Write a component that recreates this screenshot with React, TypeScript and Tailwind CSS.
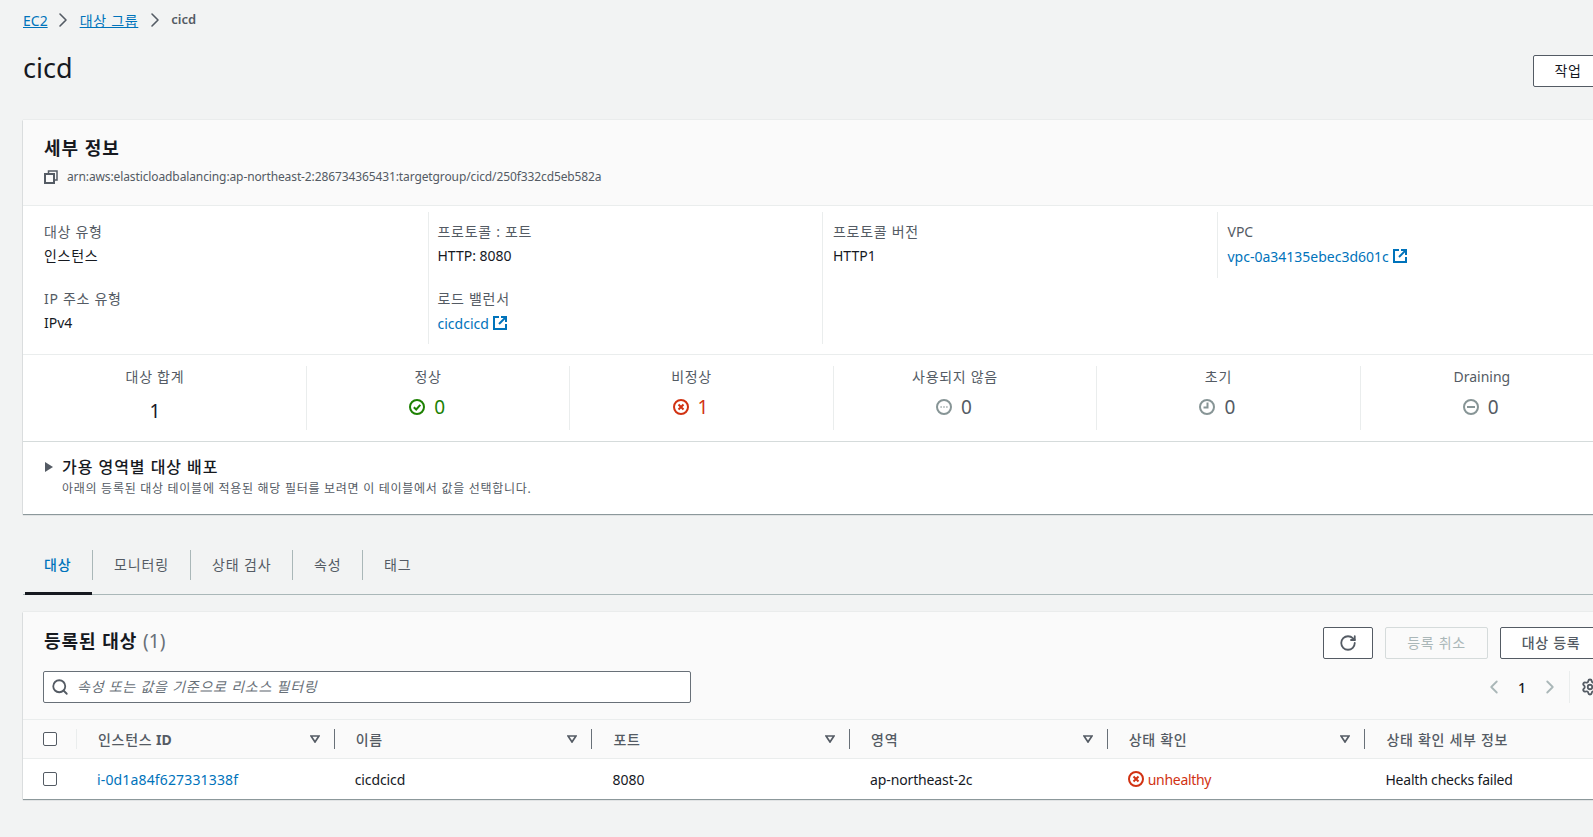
import { ChevronLeft, ChevronRight, RotateCw, Search, Settings } from 'lucide-react'

const columns = ['인스턴스', '이름', '포트', '영역', '상태 확인', '상태 확인 세부 정보']

// Korean glyphs run a bit wider in the reference
const track = (text: string) => (/[가-힣]/.test(text) ? 'tracking-[0.05em]' : '')

function ExternalIcon() {
  return (
    <svg width="14" height="14" viewBox="0 0 14 14" fill="none" stroke="#0073bb" strokeWidth="2" className="shrink-0">
      <path d="M6 1H1v12h12V8" />
      <path d="M8 1h5v5" />
      <path d="M12.6 1.4 6 8" />
    </svg>
  )
}

function CopyIcon() {
  return (
    <svg width="14" height="14" viewBox="0 0 14 14" fill="none" stroke="#545b64" strokeWidth="1.5">
      <rect x="1" y="4" width="9" height="9" strokeWidth="2" />
      <path d="M4.5 3V1H13v9h-2" />
    </svg>
  )
}

function StatusIcon({ kind }: { kind: 'ok' | 'error' | 'dots' | 'clock' | 'minus' }) {
  const color = kind === 'ok' ? '#1d8102' : kind === 'error' ? '#d13212' : '#879596'
  return (
    <svg width="16" height="16" viewBox="0 0 16 16" fill="none" stroke={color} strokeWidth="2" className="shrink-0">
      <circle cx="8" cy="8" r="7" />
      {kind === 'ok' && <path d="M4.8 8.2 7.2 10.5 11.3 5.8" />}
      {kind === 'error' && <path d="M5.5 5.5 10.5 10.5M10.5 5.5 5.5 10.5" />}
      {kind === 'dots' && <path d="M4.5 8h1.2M7.4 8h1.2M10.3 8h1.2" strokeWidth="1.5" />}
      {kind === 'clock' && <path d="M8.5 3.5v5h-4" />}
      {kind === 'minus' && <path d="M4 8h8" />}
    </svg>
  )
}

function SortIcon() {
  return (
    <svg width="10" height="8" viewBox="0 0 10 8" fill="none" stroke="#545b64" strokeWidth="1.7">
      <path d="M1 1h8L5 7z" />
    </svg>
  )
}

function Field({ label, value, link }: { label: string; value: string; link?: boolean }) {
  return (
    <div className="h-[67px]">
      <div className={`h-[23px] leading-[24px] text-[#545b64] ${track(label)}`}>{label}</div>
      {link ? (
        <div className="flex items-center gap-[4px] h-[26px] text-[#0073bb]">
          {value}
          <ExternalIcon />
        </div>
      ) : (
        <div className={`h-[26px] leading-[26px] text-[#16191f] ${track(value)}`}>{value}</div>
      )}
    </div>
  )
}

function Stat({ label, value, kind, first }: { label: string; value: string; kind?: 'ok' | 'error' | 'dots' | 'clock' | 'minus'; first?: boolean }) {
  const valueColor = kind === 'ok' ? 'text-[#1d8102]' : kind === 'error' ? 'text-[#d13212]' : 'text-[#545b64]'
  return (
    <div className={first ? 'w-[283px] h-[64px] pr-[19px]' : 'w-[263.5px] h-[64px] pr-[20px] border-l border-[#eaeded]'}>
      <div className={`text-center h-[27px] leading-[22px] text-[#545b64] ${track(label)}`}>{label}</div>
      {kind ? (
        <div className={`flex items-center justify-center gap-[9px] pr-[2px] h-[28px] text-[19px] ${valueColor}`}>
          <StatusIcon kind={kind} />
          {value}
        </div>
      ) : (
        <div className="text-center h-[36px] leading-[36px] text-[19px] text-[#16191f]">{value}</div>
      )}
    </div>
  )
}

export default function App() {
  return (
    <div className="h-[837px] w-full overflow-hidden bg-[#f2f3f3] pl-[23px] text-[14px] text-[#16191f] font-['Noto_Sans','Noto_Sans_CJK_KR',sans-serif]">
      <div className="w-[1600px]">
        {/* Breadcrumb */}
        <div className="flex items-center h-[40px] text-[#545b64]">
          <a className="text-[#0073bb] underline">EC2</a>
          <ChevronRight size={24} strokeWidth={1.6} className="ml-[3px] mr-[5px]" />
          <a className="text-[#0073bb] underline tracking-[0.05em]">대상 그룹</a>
          <ChevronRight size={24} strokeWidth={1.6} className="ml-[5px] mr-[4px]" />
          <span className="font-semibold text-[13px]">cicd</span>
        </div>

        {/* Title */}
        <div className="flex items-start justify-between mt-[15px] h-[32px]">
          <h1 className="text-[27px] leading-[26px]">cicd</h1>
          <button className="w-[70px] h-[32px] mr-[20px] pb-[2px] bg-white border border-[#545b64] rounded-[2px] text-[#16191f] tracking-[0.05em]">작업</button>
        </div>

        {/* Details card */}
        <section className="mt-[33px] bg-white shadow-[0_1px_1px_rgba(0,28,36,0.4),0_0_1px_rgba(0,28,36,0.2)]">
          <div className="h-[86px] bg-[#fafafa] border-b border-[#eaeded] pl-[21px] pt-[14px]">
            <h2 className="text-[18px] font-bold leading-[28px] tracking-[0.055em]">세부 정보</h2>
            <div className="flex items-center gap-[9px] mt-[6px] text-[12px] tracking-[-0.11px] text-[#545b64]">
              <CopyIcon />
              arn:aws:elasticloadbalancing:ap-northeast-2:286734365431:targetgroup/cicd/250f332cd5eb582a
            </div>
          </div>
          <div className="flex h-[149px] border-b border-[#eaeded] pt-[6px]">
            <div className="w-[404.5px] h-[132px] pl-[21px] pt-[8px]">
              <Field label="대상 유형" value="인스턴스" />
              <Field label="IP 주소 유형" value="IPv4" />
            </div>
            <div className="w-[394.5px] h-[132px] pl-[9px] pt-[8px] border-l border-[#eaeded]">
              <Field label="프로토콜 : 포트" value="HTTP: 8080" />
              <Field label="로드 밸런서" value="cicdcicd" link />
            </div>
            <div className="w-[394.5px] h-[132px] pl-[10px] pt-[8px] border-l border-[#eaeded]">
              <Field label="프로토콜 버전" value="HTTP1" />
            </div>
            <div className="w-[300px] h-[66px] pl-[10px] pt-[8px] border-l border-[#eaeded]">
              <Field label="VPC" value="vpc-0a34135ebec3d601c" link />
            </div>
          </div>
          <div className="flex h-[87px] border-b border-[#d5dbdb] pt-[11px]">
            <Stat first label="대상 합계" value="1" />
            <Stat label="정상" value="0" kind="ok" />
            <Stat label="비정상" value="1" kind="error" />
            <Stat label="사용되지 않음" value="0" kind="dots" />
            <Stat label="초기" value="0" kind="clock" />
            <Stat label="Draining" value="0" kind="minus" />
          </div>
          <div className="h-[72px] pl-[22px] pt-[13px]">
            <div className="flex items-center gap-[9px] h-[24px]">
              <span className="w-0 h-0 border-y-[5px] border-y-transparent border-l-[8px] border-l-[#545b64]" />
              <h3 className="text-[16px] font-medium leading-[24px] tracking-[0.06em]">가용 영역별 대상 배포</h3>
            </div>
            <p className="pl-[17px] text-[12px] leading-[18px] mt-[1px] tracking-[0.06em] text-[#545b64]">아래의 등록된 대상 테이블에 적용된 해당 필터를 보려면 이 테이블에서 값을 선택합니다.</p>
          </div>
        </section>

        {/* Tabs */}
        <div className="flex mt-[36px] h-[45px] border-b border-[#aab7b8] text-[#545b64] tracking-[0.06em]">
          <div className="relative w-[69px] h-[44px] pl-[21px] pt-[3px] leading-[24px] text-[#0073bb] font-medium">
            대상
            <span className="absolute left-[2px] right-0 bottom-[-1px] h-[3px] bg-[#16191f]" />
          </div>
          {['모니터링', '상태 검사', '속성', '태그'].map((tab, i) => (
            <div key={tab} className={`h-[30px] leading-[30px] border-l border-[#aab7b8] ${['w-[98px]', 'w-[102px]', 'w-[70px]', 'w-[70px]'][i]} pl-[21px]`}>
              {tab}
            </div>
          ))}
        </div>

        {/* Registered targets */}
        <section className="mt-[17px] bg-white shadow-[0_1px_1px_rgba(0,28,36,0.4),0_0_1px_rgba(0,28,36,0.2)]">
          <div className="h-[107px] bg-[#fafafa] pl-[20px] pt-[15px]">
            <div className="flex items-start justify-between">
              <h2 className="text-[18px] font-bold leading-[30px] ml-[1px] mt-[-1px] tracking-[0.055em]">
                등록된 대상 <span className="font-normal text-[#687078] text-[19px] tracking-normal">(1)</span>
              </h2>
              <div className="flex gap-[12px] mr-[21px] tracking-[0.05em]">
                <button className="flex items-center justify-center w-[50px] h-[32px] bg-white border border-[#545b64] rounded-[2px] text-[#545b64]">
                  <RotateCw size={18} strokeWidth={2.4} />
                </button>
                <button className="w-[103px] h-[32px] pb-[2px] bg-[#fafafa] border border-[#d5dbdb] rounded-[2px] text-[#aab7b8]">등록 취소</button>
                <button className="w-[102px] h-[32px] pb-[2px] bg-white border border-[#545b64] rounded-[2px] font-medium text-[#545b64]">대상 등록</button>
              </div>
            </div>
            <div className="flex items-center justify-between mt-[12px]">
              <div className="relative w-[648px] h-[32px]">
                <Search size={18} strokeWidth={2.4} className="absolute left-[8px] top-[7px] text-[#545b64]" />
                <input
                  placeholder="속성 또는 값을 기준으로 리소스 필터링"
                  className="w-full h-full bg-white border border-[#687078] rounded-[2px] pl-[33px] pb-[2px] tracking-[0.055em] placeholder:italic placeholder:text-[#687078]"
                />
              </div>
              <div className="flex items-center text-[#16191f] mr-[24px]">
                <ChevronLeft size={22} className="text-[#aab7b8]" />
                <span className="w-[34px] text-center font-medium">1</span>
                <ChevronRight size={22} className="text-[#aab7b8]" />
                <span className="h-[32px] ml-[8px] mr-[11px] border-l border-[#eaeded]" />
                <Settings size={18} strokeWidth={2.4} className="text-[#545b64]" />
              </div>
            </div>
          </div>

          <div className="flex items-center h-[40px] bg-[#fafafa] border-y border-[#eaeded] text-[#545b64]">
            <div className="flex items-center w-[53px] h-[20px] pl-[20px]">
              <span className="w-[14px] h-[14px] bg-white border border-[#545b64] rounded-[2px]" />
            </div>
            {columns.map((col, i) => (
              <div key={col} className={`flex items-center justify-between w-[257.7px] h-[20px] pl-[21px] pr-[14px] border-l ${i === 0 ? 'border-[#eaeded]' : 'border-[#687078]'}`}>
                <span className="font-medium tracking-[0.05em]">
                  {col}
                  {i === 0 && <b className="font-bold tracking-normal"> ID</b>}
                </span>
                {i < 5 && <SortIcon />}
              </div>
            ))}
          </div>
          <div className="flex items-center h-[40px]">
            <div className="flex items-center w-[53px] pl-[20px]">
              <span className="w-[14px] h-[14px] border border-[#545b64] rounded-[2px]" />
            </div>
            <div className="w-[257.7px] pl-[21px] text-[#0073bb] tracking-[0.15px]">i-0d1a84f627331338f</div>
            <div className="w-[257.7px] pl-[21px] tracking-[-0.1px]">cicdcicd</div>
            <div className="w-[257.7px] pl-[21px]">8080</div>
            <div className="w-[257.7px] pl-[21px] tracking-[-0.13px]">ap-northeast-2c</div>
            <div className="flex items-center gap-[4px] w-[257.7px] pl-[21px] text-[#d13212] tracking-[-0.3px]">
              <StatusIcon kind="error" />
              unhealthy
            </div>
            <div className="pl-[21px] tracking-[-0.2px]">Health checks failed</div>
          </div>
        </section>
      </div>
    </div>
  )
}
